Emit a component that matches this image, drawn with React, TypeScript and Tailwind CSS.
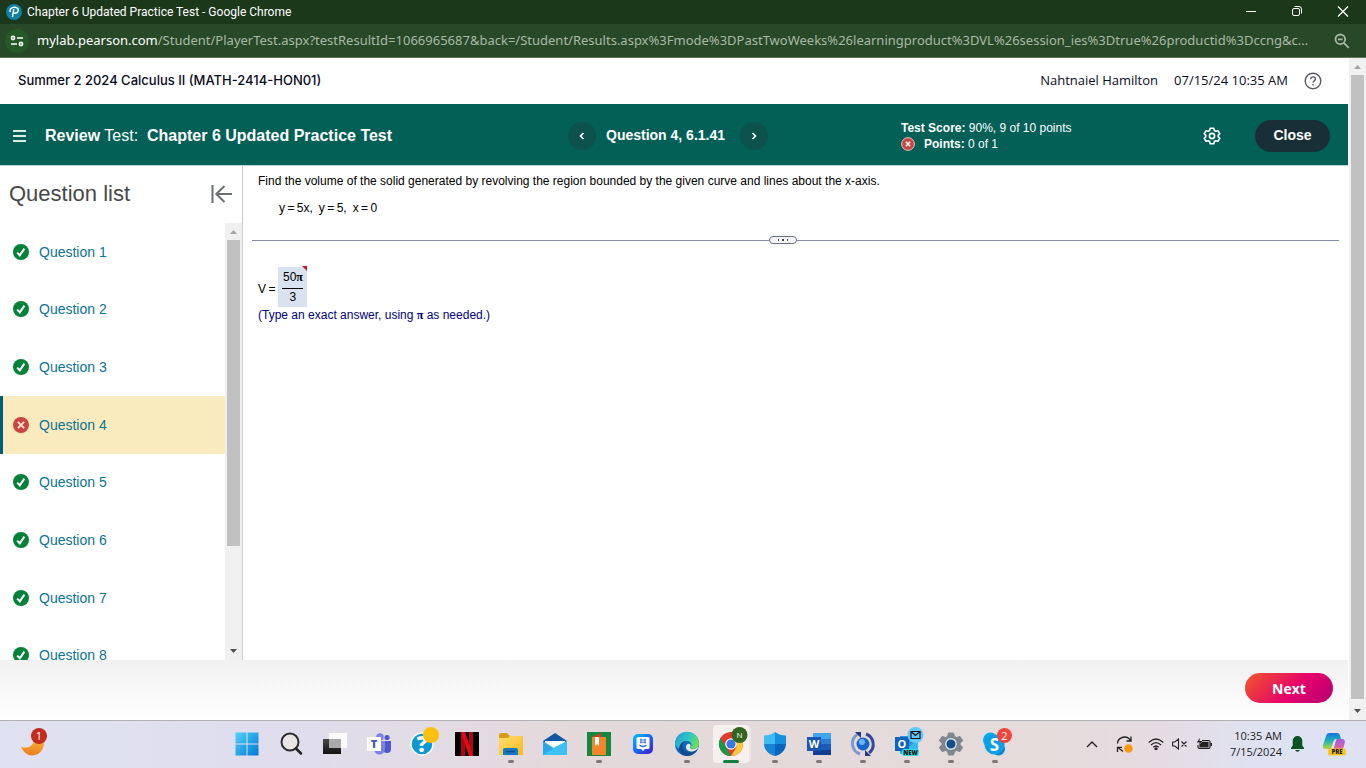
import type { ReactNode } from "react";

const questions = [
  { id: 1, correct: true },
  { id: 2, correct: true },
  { id: 3, correct: true },
  { id: 4, correct: false },
  { id: 5, correct: true },
  { id: 6, correct: true },
  { id: 7, correct: true },
  { id: 8, correct: true },
];

const ARIAL = "font-['Liberation_Sans',Arial,sans-serif]";
const SEGOE = "font-['Open_Sans','Noto_Sans',sans-serif]";

function StatusIcon({ correct, className }: { correct: boolean; className: string }) {
  return (
    <svg viewBox="0 0 16 16" className={className} aria-hidden="true">
      <circle cx="8" cy="8" r="8" fill={correct ? "#038238" : "#cb4442"} />
      {correct ? (
        <path d="M4.2 8.6 6.8 11.3 11.4 4.6" fill="none" stroke="#fff" strokeWidth="2" />
      ) : (
        <path d="m4.9 4.9 6.2 6.2m0-6.2-6.2 6.2" stroke="#fbe9d0" strokeWidth="1.9" />
      )}
    </svg>
  );
}

function Arrow({ down, dim }: { down?: boolean; dim?: boolean }) {
  return (
    <svg viewBox="0 0 17 17" className="size-[17px] shrink-0" aria-hidden="true">
      <path d={down ? "M5 6h7l-3.5 4z" : "M5 11h7L8.5 7z"} fill={dim ? "#a3a3a3" : "#505050"} />
    </svg>
  );
}

function TitleBar() {
  return (
    <header className="flex h-6 shrink-0 items-center bg-[#1b381b] text-white">
      <svg viewBox="0 0 16 16" className="ml-1.5 size-4" aria-hidden="true">
        <circle cx="8" cy="8" r="8" fill="#0d80a5" />
        <path d="M6.4 13.200 7.800 5.200M4.200 8C3.200 5.200 5.600 3.200 8.400 3.200c2.600 0 4 1.300 3.800 3.100-.2 2-2.100 3.100-4.800 2.900" fill="none" stroke="#fff" strokeWidth="1.5" />
      </svg>
      <h1 className="ml-[5px] font-['Roboto','Noto_Sans',sans-serif] text-[12px]">Chapter 6 Updated Practice Test - Google Chrome</h1>
      <div className="ml-auto flex">
        <button aria-label="Minimize" className="grid h-6 w-[46px] place-items-center">
          <svg viewBox="0 0 12 12" className="size-3" stroke="#fff" fill="none">
            <path d="M1 5.5h10" />
          </svg>
        </button>
        <button aria-label="Restore" className="grid h-6 w-[46px] place-items-center">
          <svg viewBox="0 0 12 12" className="size-3" stroke="#fff" fill="none">
            <rect x="1.5" y="2.5" width="7" height="7" rx="1.5" />
            <path d="M3.5.5H8A2.500 2.500 0 0 1 10.500 3v4.500" />
          </svg>
        </button>
        <button aria-label="Close window" className="grid h-6 w-[46px] place-items-center">
          <svg viewBox="0 0 12 12" className="size-3" stroke="#fff" strokeWidth="1.2" fill="none">
            <path d="m1 .5 10 10M11 .5l-10 10" />
          </svg>
        </button>
      </div>
    </header>
  );
}

function AddressBar() {
  return (
    <div className="flex h-[34px] shrink-0 items-center border-b border-[#5b7a58] bg-[#284928] font-['Noto_Sans','Open_Sans',sans-serif] text-[13px] text-[#a9b8a6]">
      <button aria-label="Site information" className="ml-[5px] grid size-6 shrink-0 place-items-center rounded-full bg-[#245a27]">
        <svg viewBox="0 0 14 14" className="size-3.5" fill="none" stroke="#fff" strokeWidth="1.6">
          <circle cx="3" cy="4" r="1.6" />
          <path d="M7 4h6M1 10h6" />
          <circle cx="11" cy="10" r="1.6" />
        </svg>
      </button>
      <p className="ml-2 min-w-0 flex-1 whitespace-nowrap">
        <span className="text-white">mylab.pearson.com</span>
        /Student/PlayerTest.aspx?testResultId=1066965687&amp;back=/Student/Results.aspx%3Fmode%3DPastTwoWeeks%26learningproduct%3DVL%26session_ies%3Dtrue%26productid%3Dccng&amp;c...
      </p>
      <button aria-label="Zoom out" className="mr-4 shrink-0">
        <svg viewBox="0 0 16 16" className="size-4" fill="none" stroke="#a9b8a6" strokeWidth="1.8">
          <circle cx="6.300" cy="6.300" r="4.800" />
          <path d="M4 6.300h4.600M9.800 9.800l5 5" />
        </svg>
      </button>
    </div>
  );
}

function CourseHeader() {
  return (
    <div className="flex h-[46px] shrink-0 items-center pl-[18px] pr-[26px] text-[#0a0a23]">
      <h2 className="font-['Inter',sans-serif] text-[13px] font-medium">Summer 2 2024 Calculus II (MATH-2414-HON01)</h2>
      <div className={`${SEGOE} ml-auto flex items-center text-[13px]`}>
        <span>Nahtnaiel Hamilton</span>
        <time className="ml-4">07/15/24 10:35 AM</time>
        <button aria-label="Help" className="ml-4">
          <svg viewBox="0 0 18 18" className="size-[18px]" fill="none" stroke="#5b5b66" strokeWidth="1.4">
            <circle cx="9" cy="9" r="7.800" />
            <path d="M6.600 7.200c0-3 4.900-3 4.900-.2 0 1.900-2.400 1.900-2.400 3.600M9.100 12v1.500" />
          </svg>
        </button>
      </div>
    </div>
  );
}

function NavButton({ label, d }: { label: string; d: string }) {
  return (
    <button aria-label={label} className="grid size-7 place-items-center rounded-full bg-[#0c514c]">
      <svg viewBox="0 0 8 8" className="size-2" fill="none" stroke="#fff" strokeWidth="1.6">
        <path d={d} />
      </svg>
    </button>
  );
}

function TestHeader() {
  return (
    <div className="grid h-[62px] shrink-0 grid-cols-[568px_333px_1fr_auto] items-center border-b border-[#b9d2d6] bg-[#026057] pr-[18px] pt-0.5 text-white">
      <div className="flex items-center pl-[13px]">
        <button aria-label="Menu" className="grid w-[13px] gap-[3px]">
          <span className="h-[2px] bg-[#dceae8]" />
          <span className="h-[2px] bg-[#dceae8]" />
          <span className="h-[2px] bg-[#dceae8]" />
        </button>
        <p className="ml-[19px] whitespace-pre text-[16px]">
          <b>Review</b> Test:  <b>Chapter 6 Updated Practice Test</b>
        </p>
      </div>
      <nav className="flex items-center gap-2.5" aria-label="Question navigation">
        <NavButton label="Previous question" d="M5.500 1 2.500 4l3 3" />
        <b className="w-[124px] whitespace-nowrap text-[14px]">Question 4, 6.1.41</b>
        <NavButton label="Next question" d="m2.500 1 3 3-3 3" />
      </nav>
      <div className="whitespace-nowrap text-[12px] leading-4">
        <p>
          <b>Test Score:</b> 90%, 9 of 10 points
        </p>
        <p className="flex items-center">
          <svg viewBox="0 0 16 16" className="mr-[9px] size-3.5" aria-hidden="true">
            <circle cx="8" cy="8" r="7.300" fill="#cb4442" stroke="#f3d5d4" />
            <path d="m5.500 5.500 5 5m0-5-5 5" stroke="#fff" strokeWidth="1.7" />
          </svg>
          <span>
            <b>Points:</b> 0 of 1
          </span>
        </p>
      </div>
      <div className="flex items-center">
        <button aria-label="Settings" className="mr-[34px]">
          <svg viewBox="0 0 18 18" className="size-[18px]" fill="none" stroke="#fff" strokeWidth="1.6" strokeLinejoin="round">
            <path d="M7.200 1.300h3.600l.6 2.200 1.400.8 2.200-.6 1.800 3.100-1.600 1.600v1.200l1.600 1.600-1.800 3.100-2.200-.6-1.400.8-.6 2.200H7.200l-.6-2.200-1.400-.8-2.200.6-1.800-3.100 1.600-1.600V8.400L1.200 6.800 3 3.700l2.200.6 1.400-.8z" />
            <circle cx="9" cy="9" r="2.600" />
          </svg>
        </button>
        <button className="h-8 w-[75px] rounded-full bg-[#182f38] text-[14px] font-bold">Close</button>
      </div>
    </div>
  );
}

function Sidebar() {
  return (
    <aside className="flex w-[243px] shrink-0 flex-col border-r border-[#c7cddf]">
      <div className="flex h-[57px] shrink-0 items-center justify-between pb-0.5 pl-[9px] pr-2.5">
        <h3 className="text-[22px] text-[#484848]">Question list</h3>
        <button aria-label="Collapse question list">
          <svg viewBox="0 0 21 18" className="h-[18px] w-[21px]" fill="none" stroke="#6a7070" strokeWidth="2">
            <path d="M1.500 0v18M21 9H5M13.500 1 5.300 9l8.200 8" />
          </svg>
        </button>
      </div>
      <div className="flex min-h-0 flex-1">
        <div className="flex-1 overflow-hidden">
          <ul className="grid h-[461px] grid-rows-8">
            {questions.map((q) => (
              <li key={q.id}>
                <a
                  href={`#question-${q.id}`}
                  className={
                    q.correct
                      ? "flex h-full items-center border-l-[3px] border-transparent pl-2.5 text-[#0a7396]"
                      : "flex h-full items-center border-l-[3px] border-[#005f76] bg-[#faebbe] pl-2.5 text-[#0a7396]"
                  }
                >
                  <StatusIcon correct={q.correct} className="mr-2.5 size-4" />
                  <span className="pt-px text-[14px]">Question {q.id}</span>
                </a>
              </li>
            ))}
          </ul>
        </div>
        <div className="flex w-[17px] flex-col items-center bg-[#f0f0f0]" aria-hidden="true">
          <Arrow dim />
          <div className="h-[306px] w-[13px] bg-[#c1c1c1]" />
          <div className="mt-auto">
            <Arrow down />
          </div>
        </div>
      </div>
    </aside>
  );
}

function QuestionPane() {
  return (
    <main className="min-w-0 flex-1 px-[9px] pt-2 text-[12px] leading-[14px] text-black">
      <p className="pl-1.5">
        Find the volume of the solid generated by revolving the region bounded by the given curve and lines about the x-axis.
      </p>
      <p className="mt-[13px] flex gap-1.5 pl-[27px]">
        <span>y&#8201;=&#8201;5x,</span>
        <span>y&#8201;=&#8201;5,</span>
        <span>x&#8201;=&#8201;0</span>
      </p>
      <div className="mt-[21px] flex items-center">
        <div className="h-px w-[517px] bg-[#858ca8]" />
        <button aria-label="Resize panels" className="flex h-2 w-7 items-center justify-center gap-[3px] rounded-full border border-[#6b7286] bg-[#f5f5f8]">
          <i className="h-0.5 w-px bg-[#444]" />
          <i className="h-0.5 w-0.5 bg-[#444]" />
          <i className="h-0.5 w-px bg-[#444]" />
        </button>
        <div className="h-px flex-1 bg-[#858ca8]" />
      </div>
      <div className="mt-[23px] flex items-center gap-[3px] pl-1.5">
        <span className="pt-1">V&#8201;=</span>
        <div className="relative flex h-10 w-[29px] flex-col items-center bg-[#d9e2f1] pt-[3px]">
          <span className="w-[21px] whitespace-nowrap border-b border-black pb-1 text-center">
            50<span className="font-['Liberation_Serif',serif] font-bold">π</span>
          </span>
          <span className="pt-px">3</span>
          <svg viewBox="0 0 5 5" className="absolute -top-px right-0 size-[5px]" aria-hidden="true">
            <path d="M0 0h5v5z" fill="#c22026" />
          </svg>
        </div>
      </div>
      <p className="mt-px pl-1.5 text-[#000080]">
        (Type an exact answer, using <span className="font-['Liberation_Serif',serif] font-bold">π</span> as needed.)
      </p>
    </main>
  );
}

function TaskIcon({ label, running, active, children }: { label: string; running?: boolean; active?: boolean; children: ReactNode }) {
  return (
    <button aria-label={label} className="relative grid h-[46px] w-11 place-items-center">
      {active && <span className="absolute inset-x-1 bottom-1 top-1 rounded bg-[#f6f0ef] shadow-[3px_0_0_-1px_#eee6e5]" />}
      <svg viewBox="0 0 24 24" className="relative size-6 overflow-visible font-['Open_Sans',sans-serif]">
        {children}
      </svg>
      {running && <span className="absolute bottom-1 h-[3px] w-1.5 rounded-full bg-[#7d7777]" />}
      {active && <span className="absolute bottom-1 h-[3px] w-4 rounded-full bg-[#12813f]" />}
    </button>
  );
}

function Gradients() {
  return (
    <svg className="absolute size-0" aria-hidden="true">
      <defs>
        <linearGradient id="win" x1="0" y1="0" x2="1" y2="1">
          <stop offset="0" stopColor="#52d2fb" />
          <stop offset="1" stopColor="#0078d4" />
        </linearGradient>
        <linearGradient id="moon" x1="0" y1="0" x2="0" y2="1">
          <stop offset="0" stopColor="#f5b835" />
          <stop offset="1" stopColor="#f07b1c" />
        </linearGradient>
        <linearGradient id="dark" x1="0" y1="0" x2="0" y2="1">
          <stop offset="0" stopColor="#484848" />
          <stop offset="1" stopColor="#111" />
        </linearGradient>
        <linearGradient id="folder" x1="0" y1="0" x2="1" y2="1">
          <stop offset="0" stopColor="#ffdf70" />
          <stop offset="1" stopColor="#f6b91b" />
        </linearGradient>
        <linearGradient id="groupme" x1="0" y1="0" x2="1" y2="1">
          <stop offset="0" stopColor="#00c3ff" />
          <stop offset="0.5" stopColor="#1569ff" />
          <stop offset="1" stopColor="#4b13c9" />
        </linearGradient>
        <linearGradient id="edgeTop" x1="0" y1="0" x2="1" y2="0.5">
          <stop offset="0" stopColor="#2398dc" />
          <stop offset="0.6" stopColor="#30c7c4" />
          <stop offset="1" stopColor="#66df54" />
        </linearGradient>
        <linearGradient id="copilot" x1="0" y1="0" x2="0" y2="1">
          <stop offset="0" stopColor="#1474db" />
          <stop offset="0.5" stopColor="#23b4ba" />
          <stop offset="1" stopColor="#b7d532" />
        </linearGradient>
        <linearGradient id="copilotPink" x1="0" y1="0" x2="0" y2="1">
          <stop offset="0" stopColor="#a45be5" />
          <stop offset="1" stopColor="#f4657b" />
        </linearGradient>
      </defs>
    </svg>
  );
}

function TaskbarApps() {
  return (
    <div className="flex">
      <TaskIcon label="Start">
        <path d="M.5.5h11v11H.5zm12 0h11v11h-11zm-12 12h11v11H.5zm12 0h11v11h-11z" fill="url(#win)" />
      </TaskIcon>
      <TaskIcon label="Search">
        <circle cx="11" cy="10" r="8.500" fill="#e9e5e6" stroke="#2b2b2b" strokeWidth="2" />
        <path d="m17 16.500 5 5" stroke="#222" strokeWidth="2.5" strokeLinecap="round" />
      </TaskIcon>
      <TaskIcon label="Task view">
        <path d="M0 7h18v15H0z" fill="url(#dark)" />
        <path d="M6 1h18v15H6z" fill="#fff" fillOpacity=".88" />
        <path d="M6 7h12v9H6z" fill="#aaa" />
      </TaskIcon>
      <TaskIcon label="Teams">
        <circle cx="13" cy="5" r="3.800" fill="#7b83eb" />
        <circle cx="20" cy="5.500" r="2.600" fill="#5059c9" />
        <path d="M16 9h8v8a4 4 0 0 1-8 0z" fill="#5059c9" />
        <path d="M7 9h11v8a5.500 5.500 0 0 1-11 0z" fill="#7b83eb" />
        <path d="M0 5h14v14H0z" fill="#fff" />
        <text x="7" y="16" textAnchor="middle" fontSize="11" fontWeight="800" fill="#4b53bc">T</text>
      </TaskIcon>
      <TaskIcon label="Help">
        <circle cx="11" cy="12" r="11" fill="#0b98d5" stroke="#fff" strokeWidth="1.4" />
        <text x="11" y="20" textAnchor="middle" fontSize="22" fontWeight="800" fill="#fff">?</text>
        <circle cx="20" cy="3" r="8" fill="#fdc10d" />
      </TaskIcon>
      <TaskIcon label="Netflix">
        <path d="M0 0h24v24H0z" fill="#000" />
        <rect x="6" y="0" width="4" height="24" fill="#b1060f" />
        <rect x="14" y="0" width="4" height="24" fill="#b1060f" />
        <rect x="6" y="0" width="4" height="24" fill="#e50914" transform="skewX(18.4)" />
      </TaskIcon>
      <TaskIcon label="File Explorer" running>
        <path d="M0 3a2 2 0 0 1 2-2h6l3 3h11a2 2 0 0 1 2 2v3H0z" fill="#d99c12" />
        <path d="M0 6h9l2-2h11a2 2 0 0 1 2 2v17H0z" fill="url(#folder)" />
        <path d="M4 23v-5a2 2 0 0 1 2-2h11a2 2 0 0 1 2 2v5z" fill="#1578c5" />
        <path d="M7 19.500h9" stroke="#0b4d91" strokeWidth="1.5" />
      </TaskIcon>
      <TaskIcon label="Mail">
        <path d="M0 9 12 1l12 8v5H0z" fill="#1056a4" />
        <path d="M2 9h20v7H2z" fill="#fff" />
        <path d="M0 9v14h24V9l-12 8z" fill="#2ba7e8" />
        <path d="m0 23 12-8 12-6v14z" fill="#3dc0f5" />
      </TaskIcon>
      <TaskIcon label="Books" running>
        <path d="M0 0h24v24H0z" fill="#148741" />
        <path d="M5 5h14v18H5z" fill="#f5852a" />
        <path d="m5 5 9-4v4z" fill="#d43a1c" />
        <path d="M8 5h4v9l-2-2-2 2z" fill="#fff" />
      </TaskIcon>
      <TaskIcon label="GroupMe">
        <rect x="2" y="2" width="20" height="20" rx="5" fill="url(#groupme)" />
        <path d="M7 5h10a1.500 1.500 0 0 1 1.500 1.500v9A1.500 1.500 0 0 1 17 17h-3l-2 2-2-2H7a1.500 1.500 0 0 1-1.500-1.500v-9A1.500 1.500 0 0 1 7 5z" fill="#fff" />
        <path d="M10 6.500v5M14 6.500v5M9 8h6M9 10.300h6" stroke="#2861ed" strokeWidth="0.9" />
        <path d="M8.500 13q3.500 3 7 0" stroke="#2861ed" fill="none" strokeWidth="1.3" />
      </TaskIcon>
      <TaskIcon label="Edge" running>
        <circle cx="12" cy="12" r="12" fill="#1567b6" />
        <path d="M0 12a12 12 0 0 1 24-.5c0 4-3 5.500-6 5.500-2.500 0-3-1.200-2-2.500 1.300-2-.2-5.500-4-5.500-4.500 0-7 4.500-5.500 9A12 12 0 0 1 0 12z" fill="url(#edgeTop)" />
        <path d="M12 9c-4 .5-5 3.500-4 7 1.200 3.500 5.500 5 10 4l4.500-2.500A12 12 0 0 1 12 24C6 23.500 2 18 5 13c1.500-3 4-4.200 7-4z" fill="#124b92" />
        <path d="M15.500 13c.5 2-1.500 3 1 4 2.500.7 5-.5 7-2.500-1 4-4.500 5-7.500 5-4 0-6.500-4-4-7 1-1.200 3-1 3.500.5z" fill="#e5eaf0" />
      </TaskIcon>
      <TaskIcon label="Chrome" active>
        <circle cx="12" cy="12" r="12" fill="#e33b2e" />
        <path d="M1.600 6 7 15l5 9A12 12 0 0 1 1.600 6z" fill="#17994a" />
        <path d="M12 24 17.500 15 17 7h5.900A12 12 0 0 1 12 24z" fill="#fcc934" />
        <circle cx="12" cy="12" r="5.800" fill="#fff" />
        <circle cx="12" cy="12" r="4.600" fill="#3a78e7" />
        <circle cx="20.500" cy="3" r="8" fill="#34651e" />
        <text x="20.500" y="6" textAnchor="middle" fontSize="8" fill="#fff">N</text>
      </TaskIcon>
      <TaskIcon label="Windows Security" running>
        <path d="M12 0Q7 3.500 1 3.500V12h11z" fill="#3bbdf2" />
        <path d="M12 0q5 3.500 11 3.500V12H12z" fill="#1590df" />
        <path d="M1 12h11v12C5 22 1.500 18 1 12z" fill="#1582d4" />
        <path d="M12 12h11c-.5 6-4 10-11 12z" fill="#0865bb" />
      </TaskIcon>
      <TaskIcon label="Word" running>
        <path d="M6 1h18v6H6z" fill="#41a5ee" />
        <path d="M6 7h18v5H6z" fill="#2b7cd3" />
        <path d="M6 12h18v6H6z" fill="#185abd" />
        <path d="M6 18h18v5H6z" fill="#103f91" />
        <path d="M0 5h14v14H0z" fill="#1a55b4" />
        <text x="7" y="16" textAnchor="middle" fontSize="11" fontWeight="700" fill="#fff">W</text>
      </TaskIcon>
      <TaskIcon label="Sync" running>
        <path d="M9 22A11 11 0 0 1 7 2" fill="none" stroke="#8099c9" strokeWidth="3" />
        <path d="M15 2a11 11 0 0 1 3 19" fill="none" stroke="#35499b" strokeWidth="3" />
        <path d="M4 0h6v6zM20 24h-6v-6z" fill="#253a82" />
        <circle cx="12" cy="12" r="6.500" fill="#1964cf" />
        <circle cx="11" cy="10" r="3" fill="#69b7fa" />
      </TaskIcon>
      <TaskIcon label="Outlook" running>
        <path d="M5 4h18v17H5z" fill="#2595e4" />
        <path d="m5 21 18-13v14H5z" fill="#35b9f1" />
        <path d="M0 5h14v14H0z" fill="#0f65bd" />
        <text x="7" y="16" textAnchor="middle" fontSize="11" fontWeight="700" fill="#fff">O</text>
        <circle cx="20.500" cy="3" r="8" fill="#65c8fb" />
        <path d="M16-.5h9v7h-9zl4.500 4 4.500-4" fill="none" stroke="#111" strokeWidth="1.2" />
        <rect x="7" y="17" width="17" height="7" rx="2" fill="#36dce1" />
        <text x="15.500" y="22.800" textAnchor="middle" fontSize="6" fontWeight="800" fill="#111">NEW</text>
      </TaskIcon>
      <TaskIcon label="Settings" running>
        <path d="M9.500 1h5l1 3.500 2 1L21 4.500l2.700 4.200L21 11.200v1.600l2.700 2.500L21 19.500l-3.500-1-2 1-1 3.500h-5l-1-3.500-2-1-3.500 1-2.700-4.200L3 12.800v-1.600L.3 8.700 3 4.500l3.500 1 2-1z" fill="#7f868d" strokeLinejoin="round" stroke="#7f868d" />
        <circle cx="12" cy="12" r="5.200" fill="#124f91" stroke="#dce5ec" strokeWidth="1.4" />
      </TaskIcon>
      <TaskIcon label="Skype" running>
        <circle cx="7.500" cy="8" r="7.500" fill="#09a9ee" />
        <circle cx="15.500" cy="17" r="6.500" fill="#0786d8" />
        <circle cx="11.500" cy="12.500" r="10" fill="#0a9fe8" />
        <text x="11.500" y="18.500" textAnchor="middle" fontSize="17" fontWeight="700" fill="#fff">S</text>
        <circle cx="21.500" cy="3.500" r="7.500" fill="#f0453a" />
        <text x="21.500" y="7.500" textAnchor="middle" fontSize="11" fill="#fff">2</text>
      </TaskIcon>
    </div>
  );
}

function Tray() {
  return (
    <div className="ml-auto flex items-center">
      <button aria-label="Show hidden icons" className="mr-[18px]">
        <svg viewBox="0 0 12 8" className="h-2 w-3" fill="none" stroke="#222" strokeWidth="1.4">
          <path d="m1 7 5-5 5 5" />
        </svg>
      </button>
      <button aria-label="Updates" className="mr-[15px]">
        <svg viewBox="0 0 17 17" className="size-[17px]" fill="none" stroke="#222" strokeWidth="1.3">
          <path d="M1.500 7.500a7 7 0 0 1 13-3M15 .5v4.500h-4.500M7 15.500l-5-4M1.500 16v-4.700H6" />
          <circle cx="12.500" cy="12.500" r="3.600" fill="#fb970b" stroke="#fb970b" />
        </svg>
      </button>
      <button aria-label="Network, volume and battery" className="mr-[18px] flex items-center gap-2">
        <svg viewBox="0 0 16 12" className="h-3 w-4" fill="none" stroke="#222" strokeWidth="1.2">
          <path d="M.7 4.500q7.300-7 14.600 0M3 7q5-4.800 10 0M5.300 9.300q2.700-2.600 5.400 0" />
          <circle cx="8" cy="10.800" r="1" fill="#222" />
        </svg>
        <svg viewBox="0 0 16 12" className="h-3 w-4" fill="none" stroke="#222" strokeWidth="1.1">
          <path d="M.6 4h2.200L6.500 1v10L2.800 8H.6zM9.500 3.500l5 5m0-5-5 5" />
        </svg>
        <svg viewBox="0 0 16 12" className="h-3 w-4" fill="none" stroke="#222" strokeWidth="1.2">
          <path d="M6 2.500h6.500a1.500 1.500 0 0 1 1.500 1.500v5a1.500 1.500 0 0 1-1.500 1.500h-9A1.500 1.500 0 0 1 2 9V7M15.400 5v3" />
          <path d="M6.500 4.300H12v4.500H4V7z" fill="#222" />
          <path d="M3.800 0 .8 4.500h3L2.500 7.500l4-4.500h-3z" fill="#222" stroke="none" />
        </svg>
      </button>
      <time className="text-right text-[11px] leading-4 text-[#222]">
        10:35 AM
        <br />
        7/15/2024
      </time>
      <button aria-label="Notifications" className="ml-[9px]">
        <svg viewBox="0 0 13 16" className="h-4 w-[13px]" fill="#085321">
          <path d="M6.500 0A4.800 4.800 0 0 1 11.300 5v4.500L13 12v1H0v-1l1.700-2.500V5A4.800 4.800 0 0 1 6.500 0zM4.300 14h4.400a2.200 1.800 0 0 1-4.400 0z" />
        </svg>
      </button>
      <button aria-label="Copilot" className="ml-[18px] mr-5">
        <svg viewBox="0 0 24 24" className="size-6 overflow-visible font-['Open_Sans',sans-serif]">
          <path d="M7 1h8q2 0 2.800 2L19 7h-5q-2 0-2.700 2.500L9 17H3.500Q0 17 1 13L4 4q1-3 3-3z" fill="url(#copilot)" />
          <path d="M15 7h5q3.500 0 2.700 4l-1.500 5q-.8 4-4.200 4h-8q2 0 2.500-2.500l2-7.500q.5-3 1.500-3z" fill="url(#copilotPink)" />
          <rect x="6" y="16.500" width="18" height="7" rx="2" fill="#fdc619" />
          <text x="15" y="22.200" textAnchor="middle" fontSize="6" fontWeight="800" fill="#222">PRE</text>
        </svg>
      </button>
    </div>
  );
}

function Taskbar() {
  return (
    <footer className={`${SEGOE} flex h-12 shrink-0 items-start border-t border-[#b2afb5] bg-[linear-gradient(90deg,#dfe2f2_0%,#e0dded_22%,#e4d9da_42%,#e5dbdb_76%,#e6dbe0_84%,#dfe2f2_92%,#dfe2f2_100%)]`}>
      <div className="flex h-[46px] w-full items-center">
        <div className="w-[225px] pb-1 pl-[21px]">
          <button aria-label="Weather" className="block">
            <svg viewBox="0 0 28 28" className="size-7">
              <path d="M0 19q12 3 14-9l8 1q3 9-5 15-11 5-17-7z" fill="url(#moon)" />
              <circle cx="18" cy="8" r="8" fill="#c42b1c" />
              <text x="18" y="12" textAnchor="middle" fontSize="11" fill="#fff">1</text>
            </svg>
          </button>
        </div>
        <TaskbarApps />
        <Tray />
      </div>
    </footer>
  );
}

export default function App() {
  return (
    <div className={`${ARIAL} flex h-screen flex-col overflow-hidden bg-white`}>
      <Gradients />
      <TitleBar />
      <AddressBar />
      <div className="flex min-h-0 flex-1">
        <div className="flex min-w-0 flex-1 flex-col pr-px">
          <CourseHeader />
          <TestHeader />
          <div className="flex min-h-0 flex-1">
            <Sidebar />
            <QuestionPane />
          </div>
          <div className="flex h-[60px] shrink-0 items-center justify-end bg-linear-to-b from-[#f1f1f1] to-white pb-1 pr-[15px]">
            <button className={`${SEGOE} h-[30px] w-[88px] rounded-full bg-[linear-gradient(135deg,#f04a32_10%,#e4006c_58%,#bb0071_95%)] text-[14px] font-bold text-white`}>
              Next
            </button>
          </div>
        </div>
        <div className="flex w-[17px] shrink-0 flex-col items-center bg-[#f1f1f1]" aria-hidden="true">
          <Arrow dim />
          <div className="w-[13px] flex-1 bg-[#c1c1c1]" />
          <div className="pt-1">
            <Arrow down />
          </div>
        </div>
      </div>
      <Taskbar />
    </div>
  );
}
